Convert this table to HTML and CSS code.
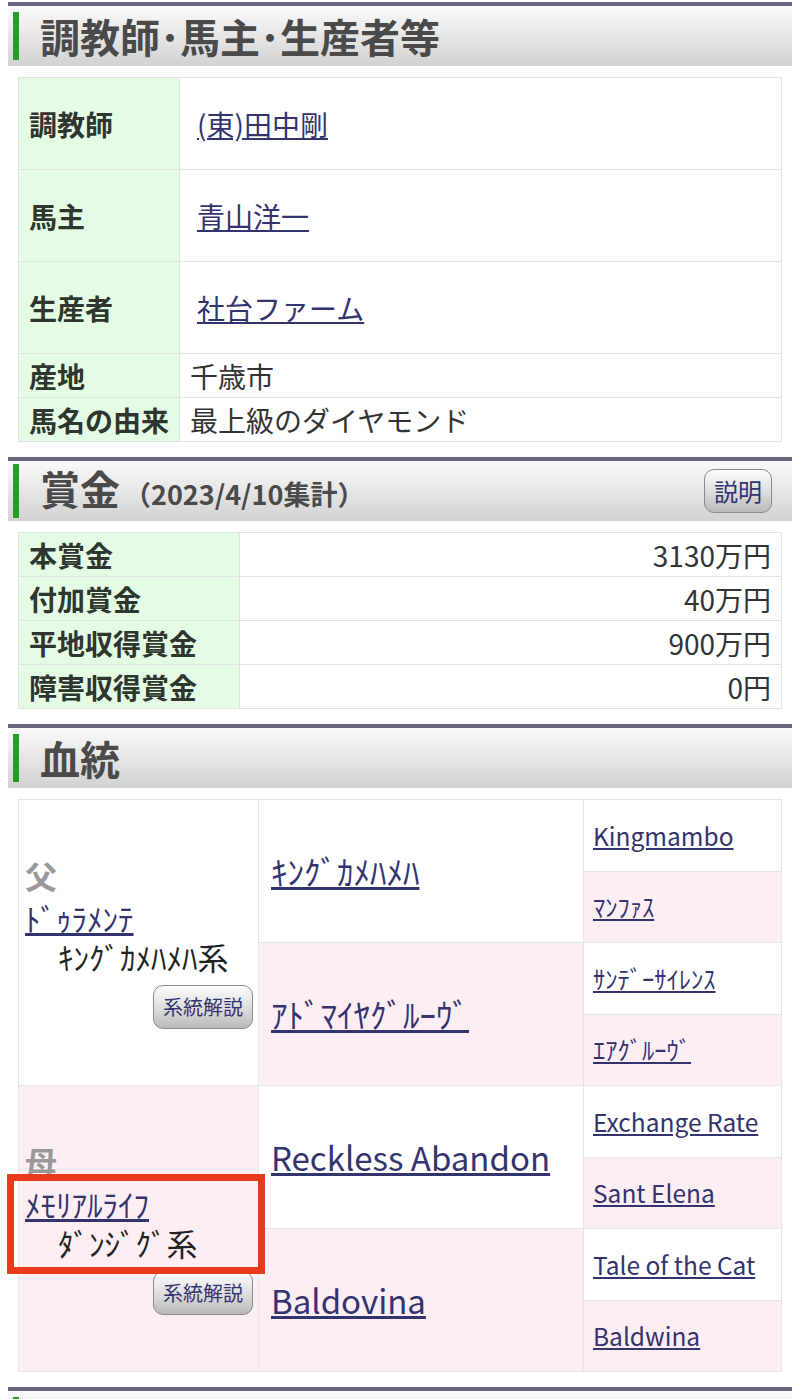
FILE: index.html
```html
<!DOCTYPE html>
<html lang="ja">
<head>
  <meta charset="UTF-8">
  <title>調教師・馬主・生産者等</title>
  <link rel="stylesheet" href="styles.css">
</head>
<body>
  <!-- 調教師・馬主・生産者 -->
  <div class="section-head">
    <h2>調教師･馬主･生産者等</h2>
  </div>
  <table class="info">
    <tr class="tall">
      <th>調教師</th>
      <td><a href="#">(東)田中剛</a></td>
    </tr>
    <tr class="tall">
      <th>馬主</th>
      <td><a href="#">青山洋一</a></td>
    </tr>
    <tr class="tall">
      <th>生産者</th>
      <td><a href="#">社台ファーム</a></td>
    </tr>
    <tr>
      <th>産地</th>
      <td>千歳市</td>
    </tr>
    <tr>
      <th>馬名の由来</th>
      <td>最上級のダイヤモンド</td>
    </tr>
  </table>

  <!-- 賞金 -->
  <div class="section-head">
    <h2>賞金<span class="sub">（2023/4/10集計）</span></h2>
    <a class="btn" href="#">説明</a>
  </div>
  <table class="info prize">
    <tr>
      <th>本賞金</th>
      <td>3130万円</td>
    </tr>
    <tr>
      <th>付加賞金</th>
      <td>40万円</td>
    </tr>
    <tr>
      <th>平地収得賞金</th>
      <td>900万円</td>
    </tr>
    <tr>
      <th>障害収得賞金</th>
      <td>0円</td>
    </tr>
  </table>

  <!-- 血統 -->
  <div class="section-head">
    <h2>血統</h2>
  </div>
  <table class="pedigree">
    <tr>
      <td class="parent" rowspan="4">
        <div class="role">父</div>
        <a href="#">ﾄﾞｩﾗﾒﾝﾃ</a>
        <div class="line">ｷﾝｸﾞｶﾒﾊﾒﾊ系</div>
        <div class="btn-row"><a class="btn small" href="#">系統解説</a></div>
      </td>
      <td class="gen2" rowspan="2"><a href="#">ｷﾝｸﾞｶﾒﾊﾒﾊ</a></td>
      <td class="gen3"><a href="#">Kingmambo</a></td>
    </tr>
    <tr>
      <td class="gen3 pink"><a href="#">ﾏﾝﾌｧｽ</a></td>
    </tr>
    <tr>
      <td class="gen2 pink" rowspan="2"><a href="#">ｱﾄﾞﾏｲﾔｸﾞﾙｰｳﾞ</a></td>
      <td class="gen3"><a href="#">ｻﾝﾃﾞｰｻｲﾚﾝｽ</a></td>
    </tr>
    <tr>
      <td class="gen3 pink"><a href="#">ｴｱｸﾞﾙｰｳﾞ</a></td>
    </tr>
    <tr>
      <td class="parent pink" rowspan="4">
        <div class="role">母</div>
        <div class="marked">
          <a href="#">ﾒﾓﾘｱﾙﾗｲﾌ</a>
          <div class="line">ﾀﾞﾝｼﾞｸﾞ系</div>
        </div>
        <div class="btn-row"><a class="btn small" href="#">系統解説</a></div>
      </td>
      <td class="gen2" rowspan="2"><a href="#">Reckless Abandon</a></td>
      <td class="gen3"><a href="#">Exchange Rate</a></td>
    </tr>
    <tr>
      <td class="gen3 pink"><a href="#">Sant Elena</a></td>
    </tr>
    <tr>
      <td class="gen2 pink" rowspan="2"><a href="#">Baldovina</a></td>
      <td class="gen3"><a href="#">Tale of the Cat</a></td>
    </tr>
    <tr>
      <td class="gen3 pink"><a href="#">Baldwina</a></td>
    </tr>
  </table>

  <div class="section-head">
    <h2>&nbsp;</h2>
    <span class="btn"></span>
  </div>
</body>
</html>
```

FILE: styles.css
```css
body {
  margin: 0;
  padding: 2px 8px 0;
  background-color: #fff;
  color: #333;
  font-family: "Noto Sans CJK JP", "Noto Sans", sans-serif;
  font-size: 28px;
}
a {
  color: #33336e;
}
.section-head {
  display: flex;
  align-items: center;
  justify-content: space-between;
  height: 60px;
  border-top: 4px solid #67677f;
  background: linear-gradient(#fafafa, #d2d2d2);
  padding: 0 20px 0 5px;
}
.section-head h2 {
  margin: 0;
  padding-left: 21px;
  border-left: 6px solid #23a023;
  font-size: 40px;
  line-height: 48px;
  color: #4a4a4a;
}
.section-head .sub {
  font-size: 27px;
  margin-left: 4px;
}
.btn {
  display: inline-block;
  min-width: 10px;
  border: 1px solid #8a8a8a;
  border-radius: 10px;
  background: linear-gradient(#fdfdfd, #dcdcdc 55%, #b9b9b9);
  color: #33336e;
  text-decoration: none;
  font-size: 24px;
  line-height: 42px;
  padding: 0 9px;
}
.btn.small {
  font-size: 20px;
  padding: 0 9px;
}
table {
  border-collapse: collapse;
  width: calc(100% - 20px);
  margin: 11px 10px 15px;
}
.info th,
.info td {
  border: 1px solid #e2e2e2;
  height: 43px;
  padding: 0 10px;
  line-height: 36px;
}
.info th {
  width: 140px;
  background-color: #e3fce3;
  text-align: left;
  color: #2f352f;
}
.info tr.tall th,
.info tr.tall td {
  height: 91px;
}
.info td a {
  margin-left: 7px;
}
.prize th {
  width: 200px;
}
.prize td {
  text-align: right;
}
.pedigree {
  margin-bottom: 15px;
}
.pedigree td {
  border: 1px solid #e6e6e6;
  vertical-align: middle;
  background-color: #fff;
  white-space: nowrap;
}
.pedigree td.pink {
  background-color: #fdeef3;
}
.pedigree tr {
  height: 71.5px;
}
.parent {
  width: 228px;
  padding: 0 5px 0 6px;
  line-height: 38px;
}
.role {
  font-size: 32px;
  font-weight: bold;
  color: #999;
  line-height: 36px;
  margin-bottom: 6px;
}
.parent a {
  font-size: 31px;
}
.line {
  padding-left: 33px;
  font-size: 31px;
  color: #222;
}
.btn-row {
  text-align: right;
  margin-top: 8px;
}
.marked {
  position: relative;
}
.marked::after {
  content: "";
  position: absolute;
  left: -18px;
  right: -12px;
  top: -11px;
  bottom: -12px;
  border: 7px solid #e83a1c;
}
.gen2 {
  width: 300px;
  padding: 0 12px;
  font-size: 33px;
}
.gen3 {
  padding: 0 9px;
  font-size: 24.5px;
}
```
